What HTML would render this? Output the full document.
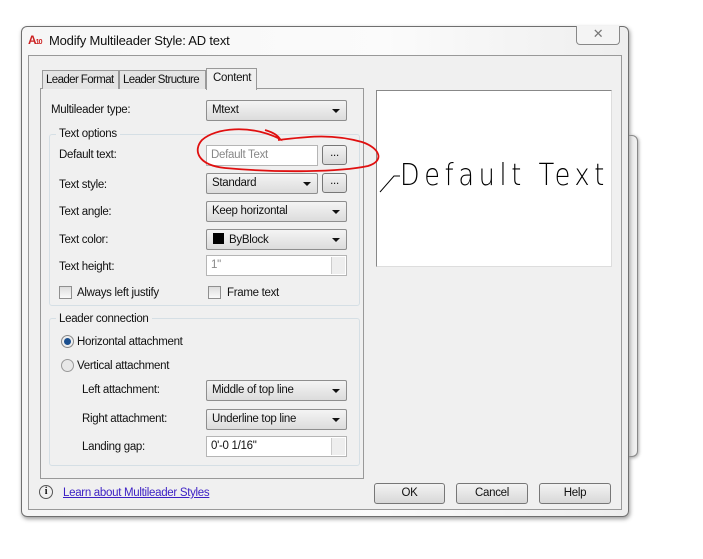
<!DOCTYPE html>
<html><head><style>
body{margin:0;width:703px;height:559px;background:#fff;position:relative;overflow:hidden;font-family:"Liberation Sans",sans-serif;font-size:11.5px;color:#111;letter-spacing:-0.3px}
div,span{position:absolute;box-sizing:border-box}
.l{white-space:nowrap;line-height:14px}
.cb{background:linear-gradient(#f4f4f4,#dcdcdc);border:1px solid #8e8e8e;border-radius:2px;height:21px;padding:3px 0 0 5px;white-space:nowrap}
.cb:after{content:"";position:absolute;right:6px;top:8px;border-left:4px solid transparent;border-right:4px solid transparent;border-top:4px solid #111}
.tb{background:#fff;border:1px solid #b5b5b5;height:21px;padding:3px 0 0 4px;color:#888;white-space:nowrap}
.bt{background:linear-gradient(#f3f3f3,#d8d8d8);border:1px solid #777;border-radius:3px;text-align:center;padding-top:3px}
.chk{width:13px;height:13px;border:1px solid #8f8f8f;background:linear-gradient(#ddd,#fafafa)}
.grp{border:1px solid #d5dfe5;border-radius:3px}
.spin{width:14px;right:1px;top:1px;bottom:1px;border-left:1px solid #ccc;background:#eee}
</style></head><body>
<div style="left:600px;top:135px;width:38px;height:322px;border:1px solid #888;border-radius:6px;background:#f0f0f0;box-shadow:1px 1px 3px #aaa"></div>
<div style="left:21px;top:26px;width:608px;height:491px;border:1px solid #6f6f6f;border-radius:6px;background:linear-gradient(90deg,#f6f6f6,#fbfbfb 60%,#eee);box-shadow:1px 2px 4px #999"></div>
<div style="left:28px;top:55px;width:594px;height:455px;border:1px solid #999;background:#f0f0f0"></div>
<div style="left:28px;top:33px;width:15px;height:14px;color:#c22;font-size:12px;font-weight:bold;letter-spacing:-1px">A<span style="font-size:7px;position:relative;left:0;top:0">10</span></div>
<div class="l" style="left:49px;top:34px;font-size:13px;letter-spacing:-0.2px">Modify Multileader Style: AD text</div>
<div style="left:576px;top:26px;width:44px;height:19px;border:1px solid #888;border-top:none;border-radius:0 0 4px 4px;background:#f4f4f4;text-align:center;color:#777;font-size:13px">✕</div>
<div style="left:40px;top:88px;width:324px;height:391px;border:1px solid #999;background:#f0f0f0"></div>
<div style="left:42px;top:70px;width:77px;height:19px;border:1px solid #999;border-bottom:none;background:#e4e4e4;padding:2px 0 0 3px;letter-spacing:-0.6px" class="l">Leader Format</div>
<div style="left:119px;top:70px;width:87px;height:19px;border:1px solid #999;border-bottom:none;background:#e4e4e4;padding:2px 0 0 3px;letter-spacing:-0.6px" class="l">Leader Structure</div>
<div style="left:206px;top:68px;width:51px;height:22px;border:1px solid #999;border-bottom:none;background:#f0f0f0;padding:2px 0 0 6px" class="l">Content</div>
<div style="left:376px;top:90px;width:236px;height:177px;border:1px solid #888;border-right-color:#ddd;border-bottom-color:#ddd;background:#fff;overflow:hidden"></div>
<svg style="position:absolute;left:376px;top:90px" width="236" height="177"><path d="M4 102 L18 86 L24 86" stroke="#000" fill="none" stroke-width="1"/></svg>
<div class="l" style="left:400px;top:158px;font-size:30px;line-height:36px;letter-spacing:5.5px;font-weight:300;color:#000;font-family:'DejaVu Sans',sans-serif;transform:scaleX(0.85);transform-origin:left">Default Text</div>
<div class="l" style="left:51px;top:103px">Multileader type:</div>
<div class="cb" style="left:206px;top:100px;width:141px">Mtext</div>
<div class="grp" style="left:49px;top:134px;width:311px;height:172px"></div>
<div class="l" style="left:56px;top:127px;background:#f0f0f0;padding:0 3px">Text options</div>
<div class="l" style="left:59px;top:148px">Default text:</div>
<div class="tb" style="left:206px;top:145px;width:112px">Default Text</div>
<div class="bt" style="left:322px;top:145px;width:25px;height:20px;padding-top:1px">...</div>
<div class="l" style="left:59px;top:178px">Text style:</div>
<div class="cb" style="left:206px;top:173px;width:112px">Standard</div>
<div class="bt" style="left:322px;top:173px;width:25px;height:20px;padding-top:1px">...</div>
<div class="l" style="left:59px;top:205px">Text angle:</div>
<div class="cb" style="left:206px;top:201px;width:141px">Keep horizontal</div>
<div class="l" style="left:59px;top:233px">Text color:</div>
<div class="cb" style="left:206px;top:229px;width:141px;padding-left:6px"><span style="position:static;display:inline-block;width:11px;height:11px;background:#000;vertical-align:-1px;margin-right:5px"></span>ByBlock</div>
<div class="l" style="left:59px;top:260px">Text height:</div>
<div class="tb" style="left:206px;top:255px;width:141px">1"<span class="spin"></span></div>
<div class="chk" style="left:59px;top:286px"></div>
<div class="l" style="left:77px;top:286px">Always left justify</div>
<div class="chk" style="left:208px;top:286px"></div>
<div class="l" style="left:227px;top:286px">Frame text</div>
<div class="grp" style="left:49px;top:318px;width:311px;height:148px"></div>
<div class="l" style="left:56px;top:312px;background:#f0f0f0;padding:0 3px">Leader connection</div>
<div style="left:61px;top:335px;width:13px;height:13px;border-radius:50%;border:1px solid #888;background:#eee"><span style="left:2px;top:2px;width:7px;height:7px;border-radius:50%;background:#1a4f8f"></span></div>
<div class="l" style="left:77px;top:335px">Horizontal attachment</div>
<div style="left:61px;top:359px;width:13px;height:13px;border-radius:50%;border:1px solid #999;background:#e8e8e8"></div>
<div class="l" style="left:77px;top:359px">Vertical attachment</div>
<div class="l" style="left:82px;top:383px">Left attachment:</div>
<div class="cb" style="left:206px;top:380px;width:141px">Middle of top line</div>
<div class="l" style="left:82px;top:412px">Right attachment:</div>
<div class="cb" style="left:206px;top:409px;width:141px">Underline top line</div>
<div class="l" style="left:82px;top:440px">Landing gap:</div>
<div class="tb" style="left:206px;top:436px;width:141px;color:#111">0'-0 1/16"<span class="spin"></span></div>
<div style="left:39px;top:485px;width:14px;height:14px;border-radius:50%;border:1px solid #555;text-align:center;font-size:10px;line-height:12px;font-weight:bold;font-family:'Liberation Serif',serif">i</div>
<div class="l" style="left:63px;top:486px;color:#3b1fc4;text-decoration:underline">Learn about Multileader Styles</div>
<div class="bt" style="left:374px;top:483px;width:71px;height:21px">OK</div>
<div class="bt" style="left:456px;top:483px;width:72px;height:21px">Cancel</div>
<div class="bt" style="left:539px;top:483px;width:72px;height:21px">Help</div>
<svg style="position:absolute;left:0;top:0" width="703" height="559"><path d="M265 130 C275 133 278 136 280 139 C250 124 215 128 202 140 C193 150 197 165 225 168 C280 173 340 172 368 166 C385 161 380 148 362 142 C330 133 305 137 278 140" stroke="#e01010" stroke-width="1.8" fill="none"/></svg>
</body></html>
